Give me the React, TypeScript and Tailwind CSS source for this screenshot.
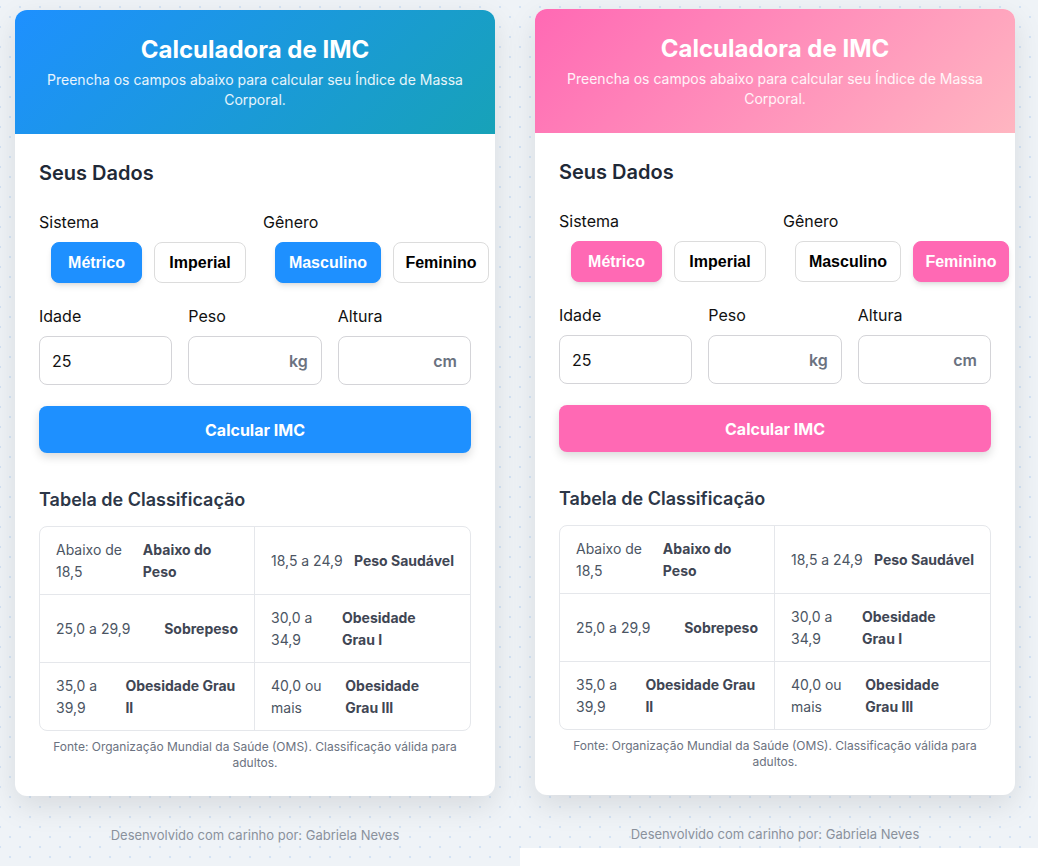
import React from 'react';

type Theme = 'blue' | 'pink';

// [range, label, optional extra class for the label]
const rows: [string, string, string?][][] = [
  [['Abaixo de 18,5', 'Abaixo do Peso'], ['18,5 a 24,9', 'Peso Saudável']],
  [['25,0 a 29,9', 'Sobrepeso'], ['30,0 a 34,9', 'Obesidade\nGrau I', 'w-[112px] shrink-0 whitespace-pre-line']],
  [['35,0 a 39,9', 'Obesidade Grau II'], ['40,0 ou mais', 'Obesidade Grau III']],
];

// buttons keep the browser's own font (Arial-like), as in the original page
const Toggle: React.FC<{ label: string; active: boolean; theme: Theme; width: string }> = ({
  label,
  active,
  theme,
  width,
}) => {
  const on = theme === 'blue' ? 'bg-[#1e90ff] border-[#1e90ff]' : 'bg-[#ff69b4] border-[#ff69b4]';
  return (
    <button
      className={`${width} h-[41px] shrink-0 rounded-lg border text-base font-bold font-['Liberation_Sans',Arial,sans-serif] ${
        active ? `${on} text-white shadow-md` : 'bg-white border-[#dcdcdc] text-black'
      }`}
    >
      {label}
    </button>
  );
};

const Field: React.FC<{ label: string; value?: string; unit?: string }> = ({ label, value, unit }) => (
  <div>
    <div className="text-base leading-6 text-[#111] mb-2">{label}</div>
    <div className="h-[49px] rounded-lg border border-[#d4d4d8] bg-white flex items-center justify-between px-3">
      <span className="text-base text-[#111]">{value}</span>
      {unit && <span className="text-base font-semibold text-[#6b7280] pr-px">{unit}</span>}
    </div>
  </div>
);

const Card: React.FC<{ theme: Theme }> = ({ theme }) => {
  const blue = theme === 'blue';
  return (
    <div className="w-[480px] bg-white rounded-xl shadow-[0_10px_30px_rgba(0,0,0,0.10)]">
      <div
        className={`rounded-t-xl px-6 pt-6 pb-6 text-center text-white ${
          blue
            ? 'bg-[linear-gradient(135deg,#1e90ff,#17a2b8)]'
            : 'bg-[linear-gradient(135deg,#ff69b4,#ffb6c1)]'
        }`}
      >
        <h1 className="text-2xl leading-8 font-bold mb-1">Calculadora de IMC</h1>
        <p className="text-sm leading-5 text-white/90">
          Preencha os campos abaixo para calcular seu Índice de Massa Corporal.
        </p>
      </div>

      <div className="px-6 pt-[25px] pb-[25px]">
        <h2 className="text-xl leading-7 font-semibold text-[#1f2937] mb-[23px]">Seus Dados</h2>

        <div className="grid grid-cols-2 gap-4">
          <div>
            <div className="text-base leading-6 text-[#111] mb-2">Sistema</div>
            <div className="flex gap-3 pl-3">
              <Toggle label="Métrico" active theme={theme} width="w-[91px]" />
              <Toggle label="Imperial" active={false} theme={theme} width="w-[92px]" />
            </div>
          </div>
          <div>
            <div className="text-base leading-6 text-[#111] mb-2">Gênero</div>
            <div className="flex gap-3 pl-3">
              <Toggle label="Masculino" active={blue} theme={theme} width="w-[106px]" />
              <Toggle label="Feminino" active={!blue} theme={theme} width="w-[96px]" />
            </div>
          </div>
        </div>

        <div className="grid grid-cols-3 gap-4 mt-[21px]">
          <Field label="Idade" value="25" />
          <Field label="Peso" unit="kg" />
          <Field label="Altura" unit="cm" />
        </div>

        <button
          className={`w-full h-[47px] mt-[21px] rounded-lg text-white text-base font-bold shadow-[0_4px_10px_rgba(0,0,0,0.15)] ${
            blue ? 'bg-[#1e90ff]' : 'bg-[#ff69b4]'
          }`}
        >
          Calcular IMC
        </button>

        <h3 className="text-lg leading-7 font-semibold text-[#2d3748] mt-[33px] mb-3">Tabela de Classificação</h3>

        <div className="rounded-lg border border-[#e5e7eb] overflow-hidden">
          {rows.map((row, i) => (
            <div key={i} className={`grid grid-cols-2 ${i > 0 ? 'border-t border-[#e5e7eb]' : ''}`}>
              {row.map(([range, label, extra], j) => (
                <div
                  key={j}
                  className={`flex items-center justify-between px-4 py-[11.5px] text-sm leading-[22px] ${
                    j === 0 ? 'border-r border-[#e5e7eb]' : ''
                  }`}
                >
                  <span className="text-[#4b5563]">{range}</span>
                  <span className={`font-bold text-[#3f4654] ${extra ?? ''}`}>{label}</span>
                </div>
              ))}
            </div>
          ))}
        </div>

        <p className="mt-2 text-xs leading-[16px] text-center text-[#6b7280]">
          Fonte: Organização Mundial da Saúde (OMS). Classificação válida para adultos.
        </p>
      </div>
    </div>
  );
};

const bg =
  'bg-[#eff3f7] bg-[radial-gradient(circle,#d3e3f5_1px,transparent_1.2px),radial-gradient(circle,#d3e3f5_1px,transparent_1.2px)] bg-[length:20px_20px] bg-[position:0_7px,10px_17px]';

export default function App() {
  return (
    <div className="flex items-start bg-white font-['Inter',sans-serif]">
      <div className={`w-[520px] h-[866px] pl-[15px] pt-[10px] ${bg}`}>
        <Card theme="blue" />
        <p className="mt-[29px] w-[480px] text-center text-[13px] leading-5 text-[#8a919c]">
          Desenvolvido com carinho por: Gabriela Neves
        </p>
      </div>
      <div className={`w-[518px] h-[848px] pl-[15px] pt-[9px] ${bg}`}>
        <Card theme="pink" />
        <p className="mt-[29px] w-[480px] text-center text-[13px] leading-5 text-[#8a919c]">
          Desenvolvido com carinho por: Gabriela Neves
        </p>
      </div>
    </div>
  );
}
